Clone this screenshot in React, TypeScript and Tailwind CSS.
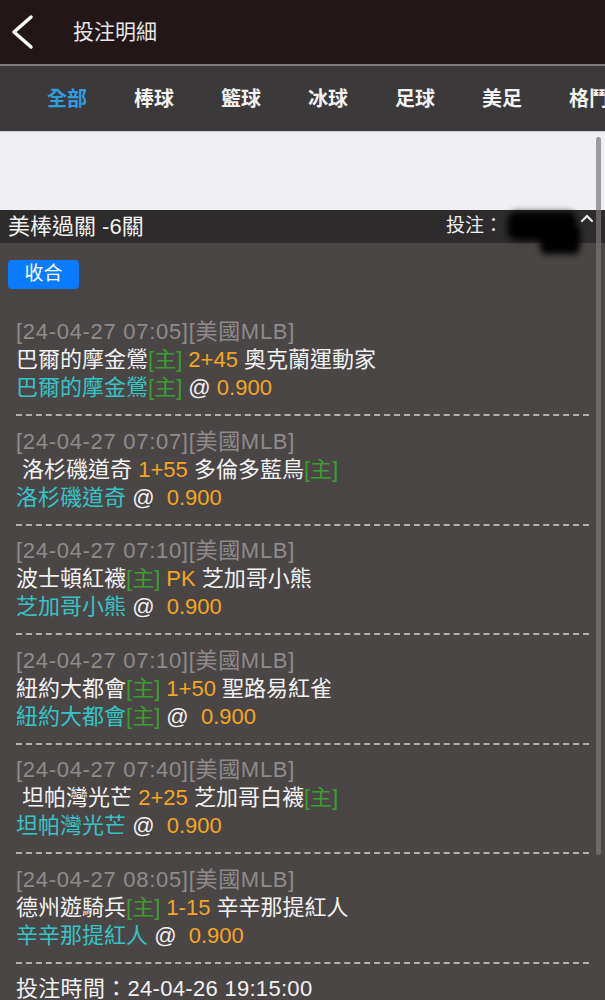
import React from "react";

type Seg = { t: string; c: "w" | "o" | "g" | "t" };

type Entry = {
  time: string;
  line1: Seg[];
  line2: Seg[];
};

const entries: Entry[] = [
  {
    time: "[24-04-27 07:05][美國MLB]",
    line1: [
      { t: "巴爾的摩金鶯", c: "w" },
      { t: "[主]", c: "g" },
      { t: " 2+45 ", c: "o" },
      { t: "奧克蘭運動家", c: "w" },
    ],
    line2: [
      { t: "巴爾的摩金鶯", c: "t" },
      { t: "[主]", c: "g" },
      { t: " @ ", c: "w" },
      { t: "0.900", c: "o" },
    ],
  },
  {
    time: "[24-04-27 07:07][美國MLB]",
    line1: [
      { t: " 洛杉磯道奇 ", c: "w" },
      { t: "1+55 ", c: "o" },
      { t: "多倫多藍鳥", c: "w" },
      { t: "[主]", c: "g" },
    ],
    line2: [
      { t: "洛杉磯道奇", c: "t" },
      { t: " @  ", c: "w" },
      { t: "0.900", c: "o" },
    ],
  },
  {
    time: "[24-04-27 07:10][美國MLB]",
    line1: [
      { t: "波士頓紅襪", c: "w" },
      { t: "[主]", c: "g" },
      { t: " PK ", c: "o" },
      { t: "芝加哥小熊", c: "w" },
    ],
    line2: [
      { t: "芝加哥小熊", c: "t" },
      { t: " @  ", c: "w" },
      { t: "0.900", c: "o" },
    ],
  },
  {
    time: "[24-04-27 07:10][美國MLB]",
    line1: [
      { t: "紐約大都會", c: "w" },
      { t: "[主]", c: "g" },
      { t: " 1+50 ", c: "o" },
      { t: "聖路易紅雀", c: "w" },
    ],
    line2: [
      { t: "紐約大都會", c: "t" },
      { t: "[主]", c: "g" },
      { t: " @  ", c: "w" },
      { t: "0.900", c: "o" },
    ],
  },
  {
    time: "[24-04-27 07:40][美國MLB]",
    line1: [
      { t: " 坦帕灣光芒 ", c: "w" },
      { t: "2+25 ", c: "o" },
      { t: "芝加哥白襪", c: "w" },
      { t: "[主]", c: "g" },
    ],
    line2: [
      { t: "坦帕灣光芒", c: "t" },
      { t: " @  ", c: "w" },
      { t: "0.900", c: "o" },
    ],
  },
  {
    time: "[24-04-27 08:05][美國MLB]",
    line1: [
      { t: "德州遊騎兵", c: "w" },
      { t: "[主]", c: "g" },
      { t: " 1-15 ", c: "o" },
      { t: "辛辛那提紅人", c: "w" },
    ],
    line2: [
      { t: "辛辛那提紅人", c: "t" },
      { t: " @  ", c: "w" },
      { t: "0.900", c: "o" },
    ],
  },
];

const tabs = ["全部", "棒球", "籃球", "冰球", "足球", "美足", "格鬥"];

function Line({ segs }: { segs: Seg[] }) {
  return (
    <div className="h-[28px] leading-[28px] whitespace-pre">
      {segs.map((s, i) => (
        <span
          key={i}
          className={
            s.c === "w"
              ? "text-[#f2f2f2]"
              : s.c === "o"
              ? "text-[#f5a623]"
              : s.c === "g"
              ? "text-[#3a9e2e]"
              : "text-[#35c4c6]"
          }
        >
          {s.t}
        </span>
      ))}
    </div>
  );
}

function Dashed() {
  return (
    <div className="h-0 border-t-2 border-dashed border-[#cfcaca] mt-[12px] mb-[11.5px] mr-[16px] opacity-80" />
  );
}

export default function App() {
  return (
    <div
      className="relative w-[605px] h-[1000px] overflow-hidden bg-[#4b4646]"
      style={{ fontFamily: '"Liberation Sans", "Noto Sans CJK TC", sans-serif' }}
    >
      {/* header */}
      <div className="h-[64px] bg-[#221716] flex items-center">
        <svg width="40" height="64" viewBox="0 0 40 64">
          <path d="M31 17 L14 32 L31 47" stroke="#ffffff" strokeWidth="3.5" fill="none" strokeLinecap="round" strokeLinejoin="round" />
        </svg>
        <span className="ml-[33px] text-[21px] text-[#e6e6e6]">投注明細</span>
      </div>
      <div className="h-[2px] bg-[#7c7a7a]" />

      {/* tabs */}
      <div className="h-[66px] bg-[#3b3939] flex items-center pl-[47px] overflow-hidden whitespace-nowrap border-b border-[#cfcfd4]">
        {tabs.map((t, i) => (
          <span
            key={t}
            className={
              "w-[87px] text-[20px] font-bold shrink-0 " +
              (i === 0 ? "text-[#2f9de0]" : "text-[#f2f2f2]")
            }
          >
            {t}
          </span>
        ))}
      </div>

      {/* empty light area */}
      <div className="h-[78px] bg-[#efeff4]" />

      {/* section header */}
      <div className="relative h-[33px] bg-[#2d2b2b] flex items-center px-[8px]">
        <span className="w-[438px] text-[22px] text-[#f2f2f2]">美棒過關 -6關</span>
        <span className="text-[19px] text-[#f2f2f2]">投注：</span>
        <div className="absolute left-[508px] top-[2px] w-[68px] h-[28px] rounded-[8px] bg-black blur-[3px]" />
        <div className="absolute left-[540px] top-[16px] w-[40px] h-[28px] rounded-[6px] bg-black blur-[3px]" />
        <svg width="14" height="10" viewBox="0 0 14 10" className="absolute left-[580px] top-[3px]">
          <path d="M2 8 L7 3 L12 8" stroke="#e8e8e8" strokeWidth="2.2" fill="none" strokeLinecap="round" />
        </svg>
      </div>

      {/* body */}
      <div className="pl-[8px]">
        <div className="mt-[17px] w-[71px] h-[29px] rounded-[4px] bg-[#0a7bff] flex items-center justify-center text-[19px] text-white">
          收合
        </div>
        <div className="mt-[29px] pl-[8px] text-[22px]">
          {entries.map((e, i) => (
            <div key={i}>
              <div className="h-[28px] leading-[28px] text-[#8f8b8b] tracking-[0.7px]">{e.time}</div>
              <Line segs={e.line1} />
              <Line segs={e.line2} />
              <Dashed />
            </div>
          ))}
          <div className="h-[28px] leading-[28px] text-[#f2f2f2] tracking-[0.3px]">投注時間：24-04-26 19:15:00</div>
        </div>
      </div>

      {/* scrollbar */}
      <div className="absolute left-[596px] top-[137px] w-[5px] h-[718px] rounded-full bg-[#7a7676] opacity-70" />
    </div>
  );
}
